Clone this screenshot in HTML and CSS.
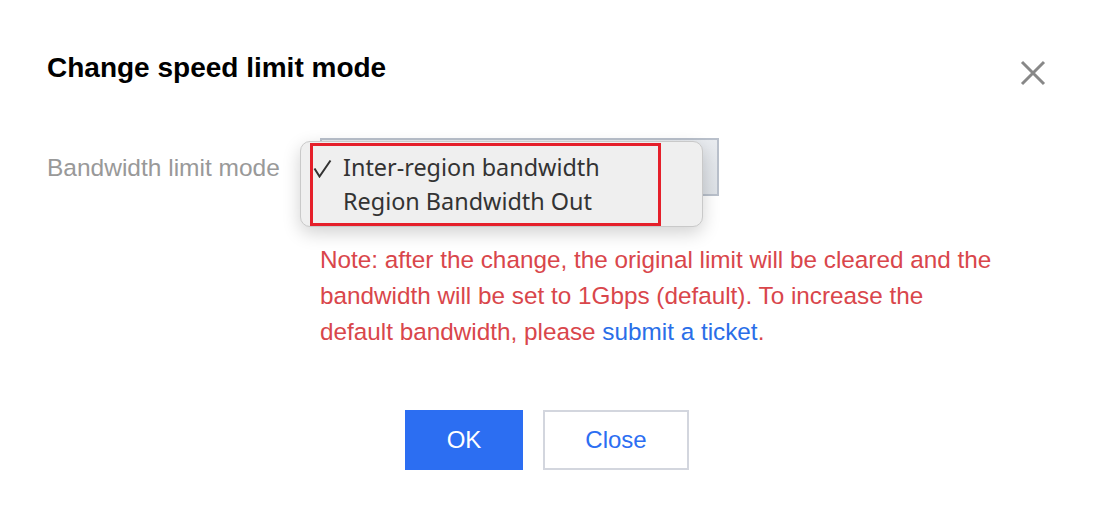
FILE: index.html
```html
<!DOCTYPE html>
<html>
<head>
<meta charset="utf-8">
<link rel="stylesheet" href="styles.css">
</head>
<body>
<div class="dialog">
  <div class="header">
    <h1 class="title">Change speed limit mode</h1>
    <button class="close-x" aria-label="Close">
      <svg width="26" height="26" viewBox="0 0 26 26"><path d="M2 2 L24 24 M24 2 L2 24" stroke="#888" stroke-width="3" fill="none"/></svg>
    </button>
  </div>
  <div class="form-row">
    <div class="label">Bandwidth limit mode</div>
    <div class="control">
      <div class="select-wrap">
        <div class="select-box"></div>
        <div class="menu">
          <div class="menu-highlight"></div>
          <div class="option"><span class="check"><svg width="19" height="19" viewBox="0 0 19 19"><path d="M1.5 9.5 L6.5 17.5 L17.5 1.5" stroke="#333" stroke-width="2" fill="none"/></svg></span>Inter-region bandwidth</div>
          <div class="option"><span class="check"></span>Region Bandwidth Out</div>
        </div>
      </div>
      <p class="note">Note: after the change, the original limit will be cleared and the bandwidth will be set to 1Gbps (default). To increase the default bandwidth, please <a class="link" href="#">submit a ticket</a>.</p>
    </div>
  </div>
  <div class="footer">
    <button class="btn btn-primary">OK</button>
    <button class="btn btn-default">Close</button>
  </div>
</div>
</body>
</html>
```
FILE: styles.css
```css
html, body {
  margin: 0;
  padding: 0;
  background: #fff;
}
body {
  font-family: "Liberation Sans", Arial, Helvetica, sans-serif;
  width: 1094px;
  height: 514px;
  overflow: hidden;
}
.dialog {
  display: flex;
  flex-direction: column;
  padding: 51px 47px 0 47px;
}
.header {
  display: flex;
  justify-content: space-between;
  align-items: flex-start;
  height: 87px;
}
.title {
  margin: 0;
  font-size: 28px;
  font-weight: bold;
  color: #000;
  line-height: 34px;
}
.close-x {
  border: 0;
  background: none;
  padding: 0;
  margin: 9px 1px 0 0;
  width: 26px;
  height: 26px;
}
.close-x svg {
  display: block;
}
.form-row {
  display: flex;
}
.label {
  width: 273px;
  flex: none;
  font-size: 24.5px;
  color: #999;
  line-height: 30px;
  padding-top: 15px;
}
.control {
  display: flex;
  flex-direction: column;
}
.select-wrap {
  position: relative;
  width: 399px;
  height: 58px;
}
.select-box {
  width: 399px;
  height: 58px;
  box-sizing: border-box;
  border: 2px solid #b9c0cb;
  background: linear-gradient(#e8ebef, #dde1e6);
}
.menu {
  position: absolute;
  left: -20px;
  top: 3px;
  width: 403px;
  height: 86px;
  box-sizing: border-box;
  border: 1px solid #c9c9c9;
  border-radius: 10px;
  background: #efefef;
  box-shadow: 0 6px 18px rgba(0,0,0,0.18);
  padding-top: 8px;
}
.menu-highlight {
  position: absolute;
  left: 9px;
  top: 1px;
  width: 351px;
  height: 83px;
  box-sizing: border-box;
  border: 3px solid #e51f2a;
}
.option {
  display: flex;
  align-items: center;
  height: 34px;
  font-family: "Noto Sans", "Open Sans", sans-serif;
  font-size: 23.4px;
  color: #333;
}
.check {
  display: flex;
  align-items: center;
  width: 42px;
  height: 34px;
  padding-left: 12px;
  box-sizing: border-box;
}
.check svg {
  display: block;
  margin-top: 2px;
}
.note {
  margin: 46px 0 0 0;
  width: 676px;
  font-size: 24.3px;
  line-height: 36px;
  color: #d9464b;
}
.link {
  color: #2a6ee8;
  text-decoration: none;
}
.footer {
  display: flex;
  justify-content: center;
  gap: 20px;
  margin-top: 60px;
}
.btn {
  height: 60px;
  font-family: "Liberation Sans", Arial, sans-serif;
  font-size: 24px;
  cursor: pointer;
  box-sizing: border-box;
}
.btn-primary {
  width: 118px;
  background: #2c6ef2;
  color: #fff;
  border: 0;
}
.btn-default {
  width: 146px;
  background: #fff;
  color: #2c6ef2;
  border: 2px solid #d3d6de;
}
```
